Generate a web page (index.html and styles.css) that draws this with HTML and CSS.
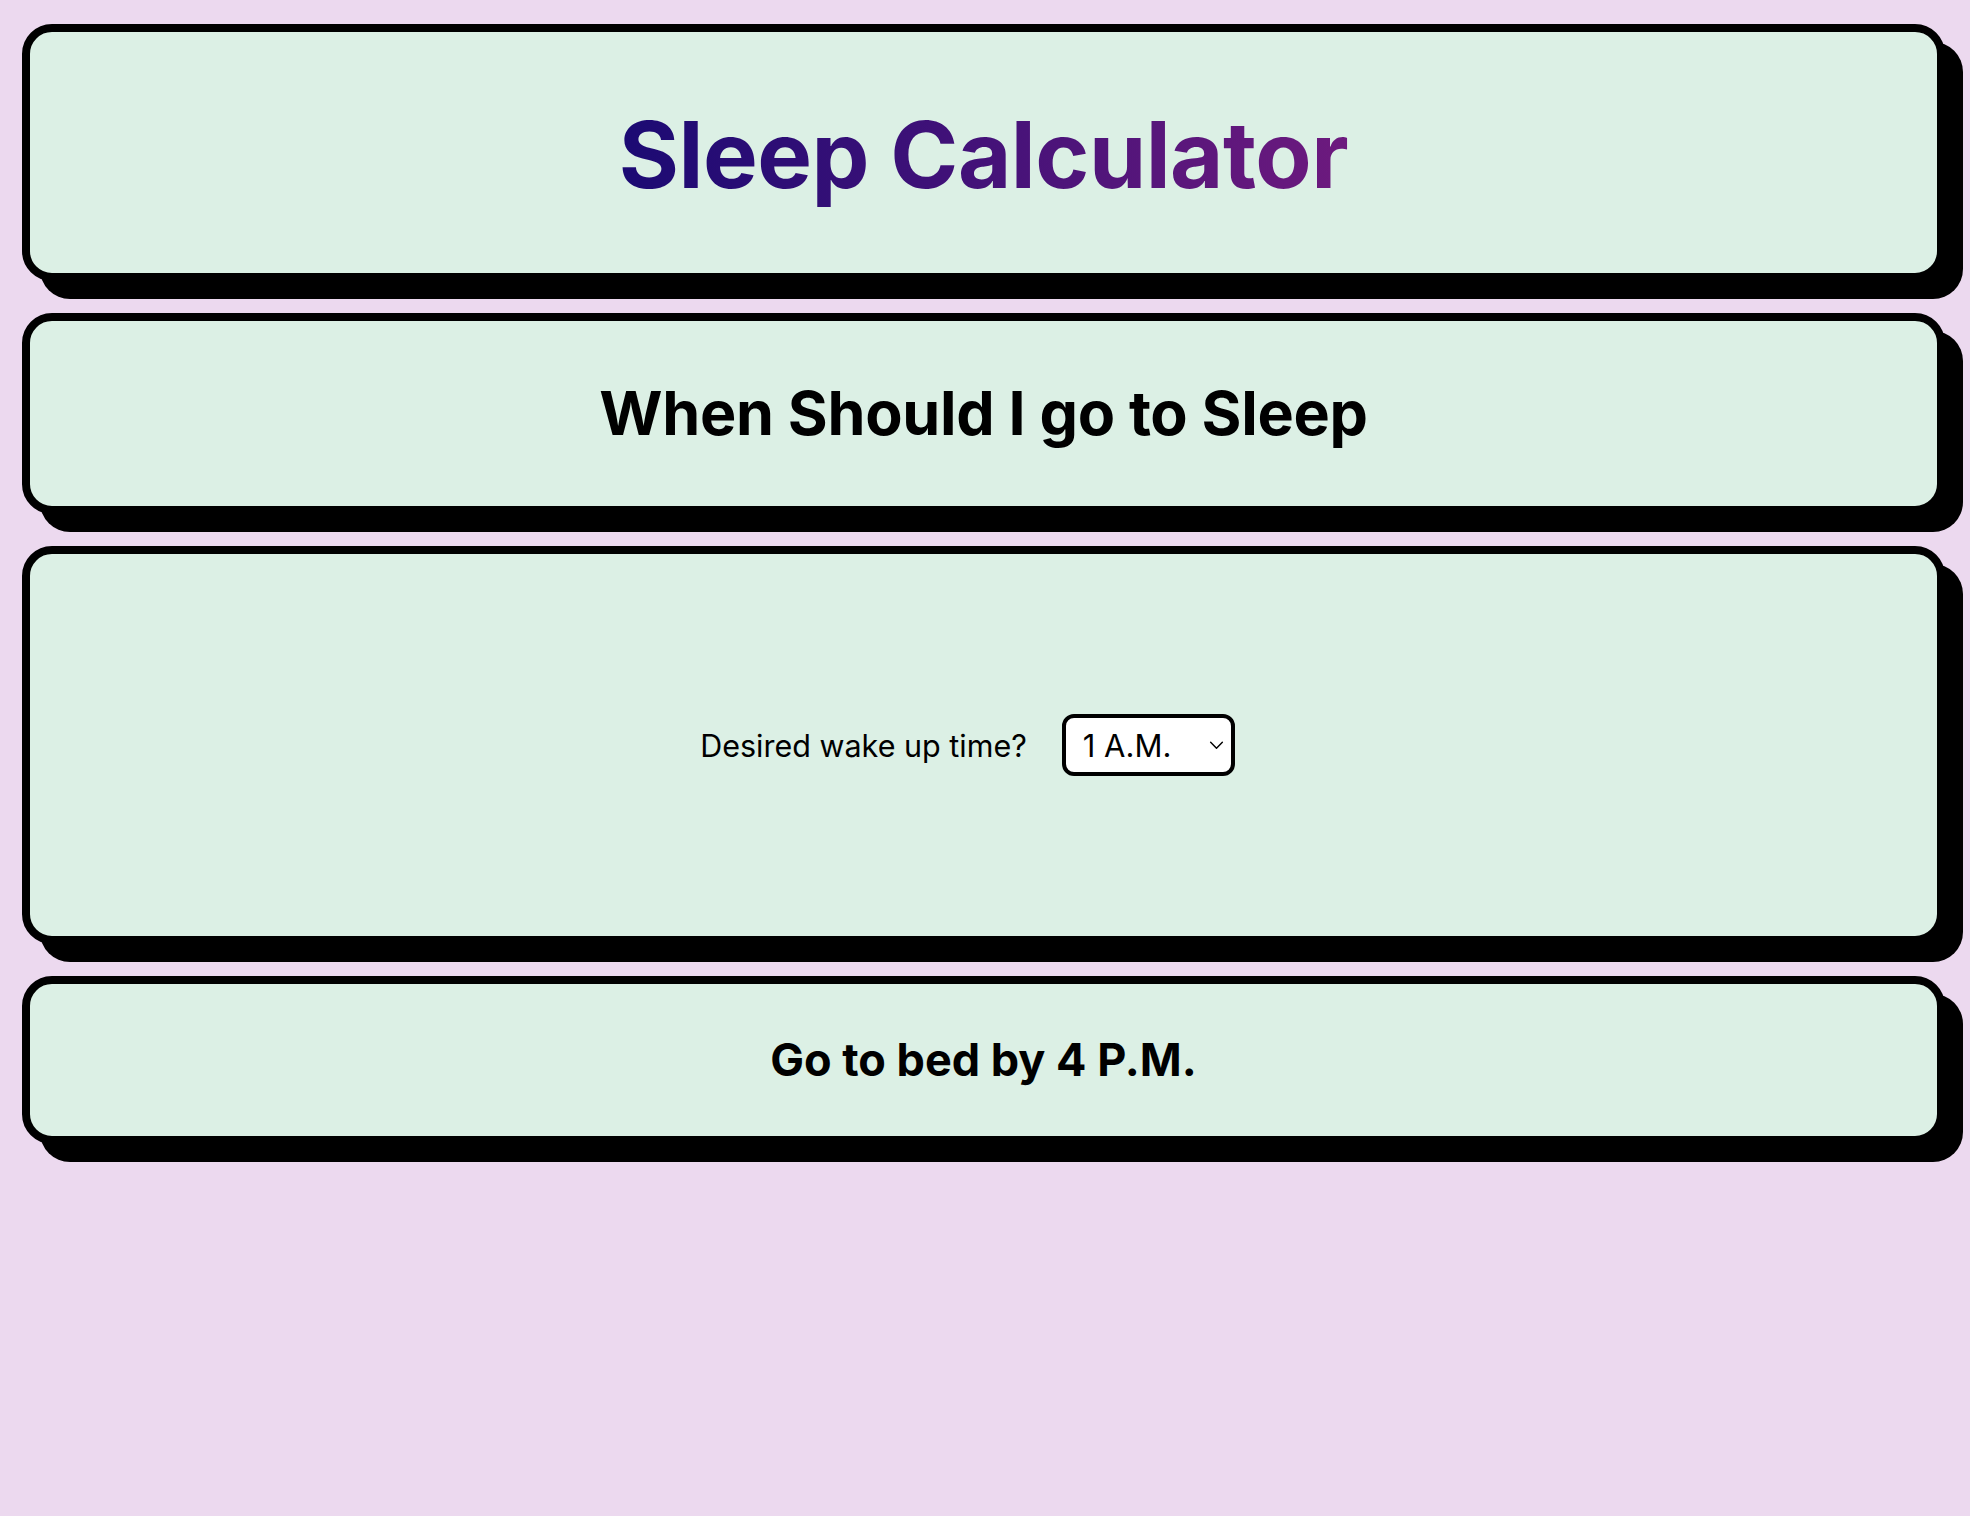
FILE: index.html
```html
<!DOCTYPE html>
<html lang="en">
<head>
<meta charset="utf-8">
<title>Sleep Calculator</title>
<link rel="stylesheet" href="styles.css">
</head>
<body>
<main class="page">
  <header class="card card-title">
    <h1 class="title">Sleep Calculator</h1>
  </header>
  <section class="card card-question">
    <h2 class="question">When Should I go to Sleep</h2>
  </section>
  <section class="card card-form">
    <label class="field" for="wake">
      <span class="field-label">Desired wake up time?</span>
      <span class="select-wrap">
        <select id="wake" class="select">
          <option>1 A.M.</option>
          <option>2 A.M.</option>
          <option>3 A.M.</option>
          <option>4 A.M.</option>
          <option>5 A.M.</option>
          <option>6 A.M.</option>
          <option>7 A.M.</option>
          <option>8 A.M.</option>
        </select>
        <svg class="chevron" viewBox="0 0 16 10" width="15" height="9" aria-hidden="true"><path d="M1.5 1.5 L8 8 L14.5 1.5" fill="none" stroke="#000" stroke-width="1.6" stroke-linecap="round" stroke-linejoin="round"/></svg>
      </span>
    </label>
  </section>
  <section class="card card-result">
    <p class="result">Go to bed by 4 P.M.</p>
  </section>
</main>
</body>
</html>
```
FILE: styles.css
```css
* {
  box-sizing: border-box;
}

html, body {
  margin: 0;
  padding: 0;
}

body {
  background: #ecd9ef;
  font-family: "Inter", "Noto Sans", "Liberation Sans", sans-serif;
  color: #000;
  min-height: 1516px;
}

.page {
  display: flex;
  flex-direction: column;
  gap: 32px;
  padding: 24px 25px 24px 22px;
}

.card {
  display: flex;
  align-items: center;
  justify-content: center;
  background: #dcf0e5;
  border: 8px solid #000;
  border-radius: 30px;
  box-shadow: 18px 18px 0 #000;
}

.card-title {
  height: 257px;
}

.card-question {
  height: 201px;
}

.card-form {
  height: 398px;
}

.card-result {
  height: 168px;
}

.title {
  margin: 0;
  font-size: 92px;
  font-weight: 700;
  line-height: 1.2;
  letter-spacing: -0.5px;
  background: linear-gradient(90deg, #1b0a73 0%, #6d1a7e 100%);
  -webkit-background-clip: text;
  background-clip: text;
  color: transparent;
  padding-top: 6px;
}

.question {
  margin: 0;
  font-size: 61px;
  font-weight: 700;
  line-height: 1.2;
  letter-spacing: -0.3px;
}

.result {
  margin: 0;
  font-size: 45px;
  font-weight: 700;
  line-height: 1.2;
}

.field {
  display: flex;
  align-items: center;
  gap: 35px;
  margin-right: 32px;
  font-size: 30.5px;
  font-weight: 400;
}

.select-wrap {
  position: relative;
  display: inline-flex;
}

.select {
  appearance: none;
  -webkit-appearance: none;
  width: 173px;
  height: 62px;
  padding: 0 40px 0 17px;
  background: #fff;
  border: 4px solid #000;
  border-radius: 12px;
  font-family: inherit;
  font-size: 31px;
  color: #000;
}

.chevron {
  position: absolute;
  right: 11px;
  top: 27px;
  pointer-events: none;
}
```
